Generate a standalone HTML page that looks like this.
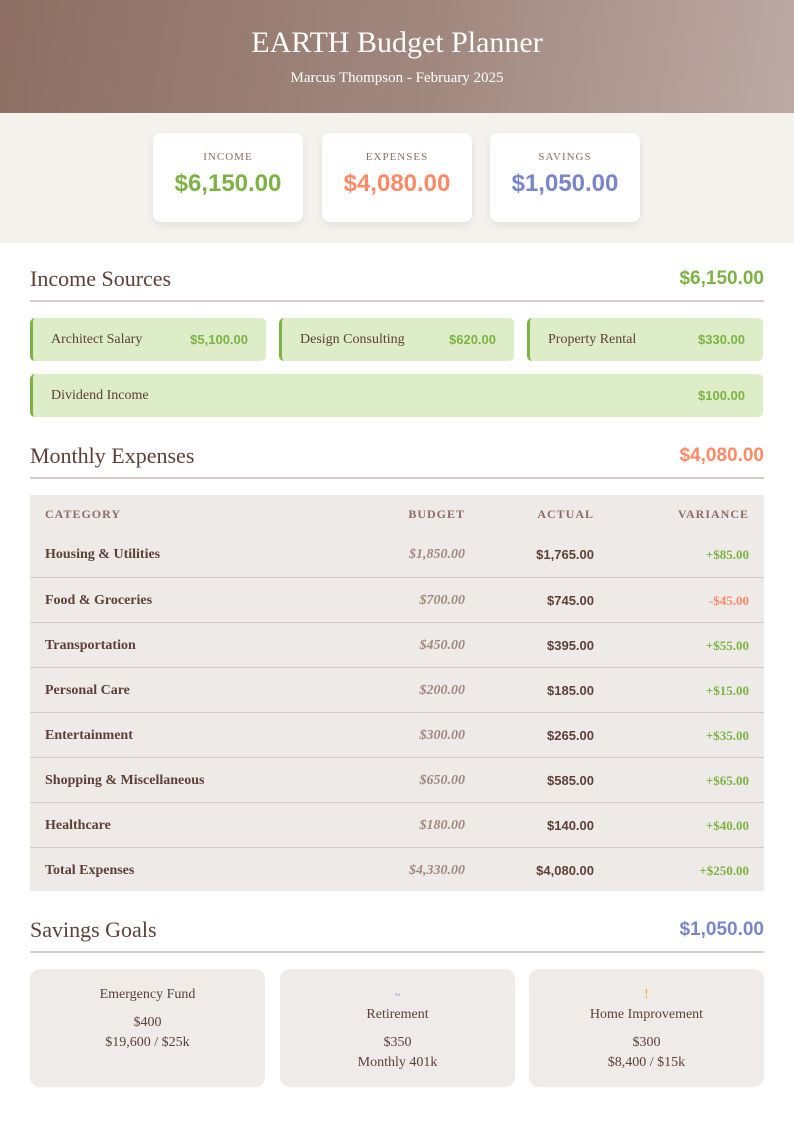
<!DOCTYPE html>
<html><head><style>
*{margin:0;padding:0;box-sizing:border-box}
body{width:794px;height:1123px;background:#fff;font-family:"Liberation Serif",serif;color:#5d4037;position:relative;overflow:hidden}
.a{position:absolute}
.hdr{left:0;top:0;width:794px;height:113px;background:linear-gradient(100deg,#8d6e63 0%,#a1887f 55%,#bcaaa4 100%);color:#fff;text-align:center}
.hdr h1{font-weight:normal;font-size:30px;position:absolute;top:26px;width:100%}
.hdr p{font-size:15px;position:absolute;top:70px;width:100%}
.band{left:0;top:113px;width:794px;height:130px;background:#f3f2ed}
.card{top:133px;width:150px;height:89px;background:#fff;border-radius:8px;box-shadow:0 3px 8px rgba(0,0,0,.08);text-align:center}
.card .l{font-size:11px;letter-spacing:1px;color:#8d6e63;margin-top:18px}
.card .v{font-family:"Liberation Sans",sans-serif;font-weight:bold;font-size:24px;margin-top:7px}
.sec{left:30px;width:734px;height:36px;border-bottom:2px solid #d7ccc8}
.sec .t{position:absolute;left:0;top:0;font-size:22px}
.sec .m{position:absolute;right:0;top:2px;font-family:"Liberation Sans",sans-serif;font-weight:bold;font-size:19px}
.inc{height:43px;background:#dcedc8;border-left:3px solid #7cb342;border-radius:5px;font-size:14px}
.inc span{position:absolute;top:14px}
.inc b{position:absolute;right:18px;top:14px;font-family:"Liberation Sans",sans-serif;color:#7cb342;font-size:13px}
.tbl{left:30px;top:495px;width:734px;height:396px;background:#eeeae7}
.row{position:absolute;left:0;width:734px;height:45px;border-top:1px solid #d3cbc8;font-size:14px}
.row div{position:absolute;top:15px}
.c1{left:15px;font-weight:bold}
.c2{right:299px;font-style:italic;color:#a1887f;font-weight:bold}
.c3{right:170px;font-family:"Liberation Sans",sans-serif;font-weight:bold;font-size:13px;top:15px!important}
.c4{right:15px;font-size:13px;font-weight:bold;color:#7cb342}
.th{position:absolute;top:12px;font-size:12px;letter-spacing:1px;font-weight:bold;color:#8d6e63}
.g{top:969px;width:235px;height:118px;background:#efebe8;border-radius:10px;text-align:center;font-size:14px;line-height:20px}
</style></head><body>
<div class="a hdr"><h1>EARTH Budget Planner</h1><p>Marcus Thompson - February 2025</p></div>
<div class="a band"></div>
<div class="a card" style="left:153px"><div class="l">INCOME</div><div class="v" style="color:#7cb342">$6,150.00</div></div>
<div class="a card" style="left:322px"><div class="l">EXPENSES</div><div class="v" style="color:#ff8a65">$4,080.00</div></div>
<div class="a card" style="left:490px"><div class="l">SAVINGS</div><div class="v" style="color:#7986cb">$1,050.00</div></div>

<div class="a sec" style="top:266px"><div class="t">Income Sources</div><div class="m" style="color:#7cb342">$6,150.00</div></div>
<div class="a inc" style="left:30px;top:318px;width:236px"><span style="left:18px">Architect Salary</span><b>$5,100.00</b></div>
<div class="a inc" style="left:279px;top:318px;width:235px"><span style="left:18px">Design Consulting</span><b>$620.00</b></div>
<div class="a inc" style="left:527px;top:318px;width:236px"><span style="left:18px">Property Rental</span><b>$330.00</b></div>
<div class="a inc" style="left:30px;top:374px;width:733px"><span style="left:18px">Dividend Income</span><b>$100.00</b></div>

<div class="a sec" style="top:443px"><div class="t">Monthly Expenses</div><div class="m" style="color:#ff8a65">$4,080.00</div></div>
<div class="a tbl">
<div class="th" style="left:15px">CATEGORY</div><div class="th" style="right:299px">BUDGET</div><div class="th" style="right:170px">ACTUAL</div><div class="th" style="right:15px">VARIANCE</div>
<div class="row" style="top:37px;border-top:none"><div class="c1">Housing &amp; Utilities</div><div class="c2">$1,850.00</div><div class="c3">$1,765.00</div><div class="c4">+$85.00</div></div>
<div class="row" style="top:82px"><div class="c1">Food &amp; Groceries</div><div class="c2">$700.00</div><div class="c3">$745.00</div><div class="c4" style="color:#ff8a65">-$45.00</div></div>
<div class="row" style="top:127px"><div class="c1">Transportation</div><div class="c2">$450.00</div><div class="c3">$395.00</div><div class="c4">+$55.00</div></div>
<div class="row" style="top:172px"><div class="c1">Personal Care</div><div class="c2">$200.00</div><div class="c3">$185.00</div><div class="c4">+$15.00</div></div>
<div class="row" style="top:217px"><div class="c1">Entertainment</div><div class="c2">$300.00</div><div class="c3">$265.00</div><div class="c4">+$35.00</div></div>
<div class="row" style="top:262px"><div class="c1">Shopping &amp; Miscellaneous</div><div class="c2">$650.00</div><div class="c3">$585.00</div><div class="c4">+$65.00</div></div>
<div class="row" style="top:307px"><div class="c1">Healthcare</div><div class="c2">$180.00</div><div class="c3">$140.00</div><div class="c4">+$40.00</div></div>
<div class="row" style="top:352px"><div class="c1">Total Expenses</div><div class="c2">$4,330.00</div><div class="c3">$4,080.00</div><div class="c4">+$250.00</div></div>
</div>

<div class="a sec" style="top:917px"><div class="t">Savings Goals</div><div class="m" style="color:#7986cb">$1,050.00</div></div>
<div class="a g" style="left:30px"><div style="margin-top:16px">Emergency Fund</div><div style="margin-top:8px">$400</div><div>$19,600 / $25k</div></div>
<div class="a g" style="left:280px"><div style="margin-top:16px;color:#7986cb;font-size:11px">~</div><div>Retirement</div><div style="margin-top:8px">$350</div><div>Monthly 401k</div></div>
<div class="a g" style="left:529px"><div style="margin-top:16px;color:#ffa726">!</div><div>Home Improvement</div><div style="margin-top:8px">$300</div><div>$8,400 / $15k</div></div>
</body></html>
